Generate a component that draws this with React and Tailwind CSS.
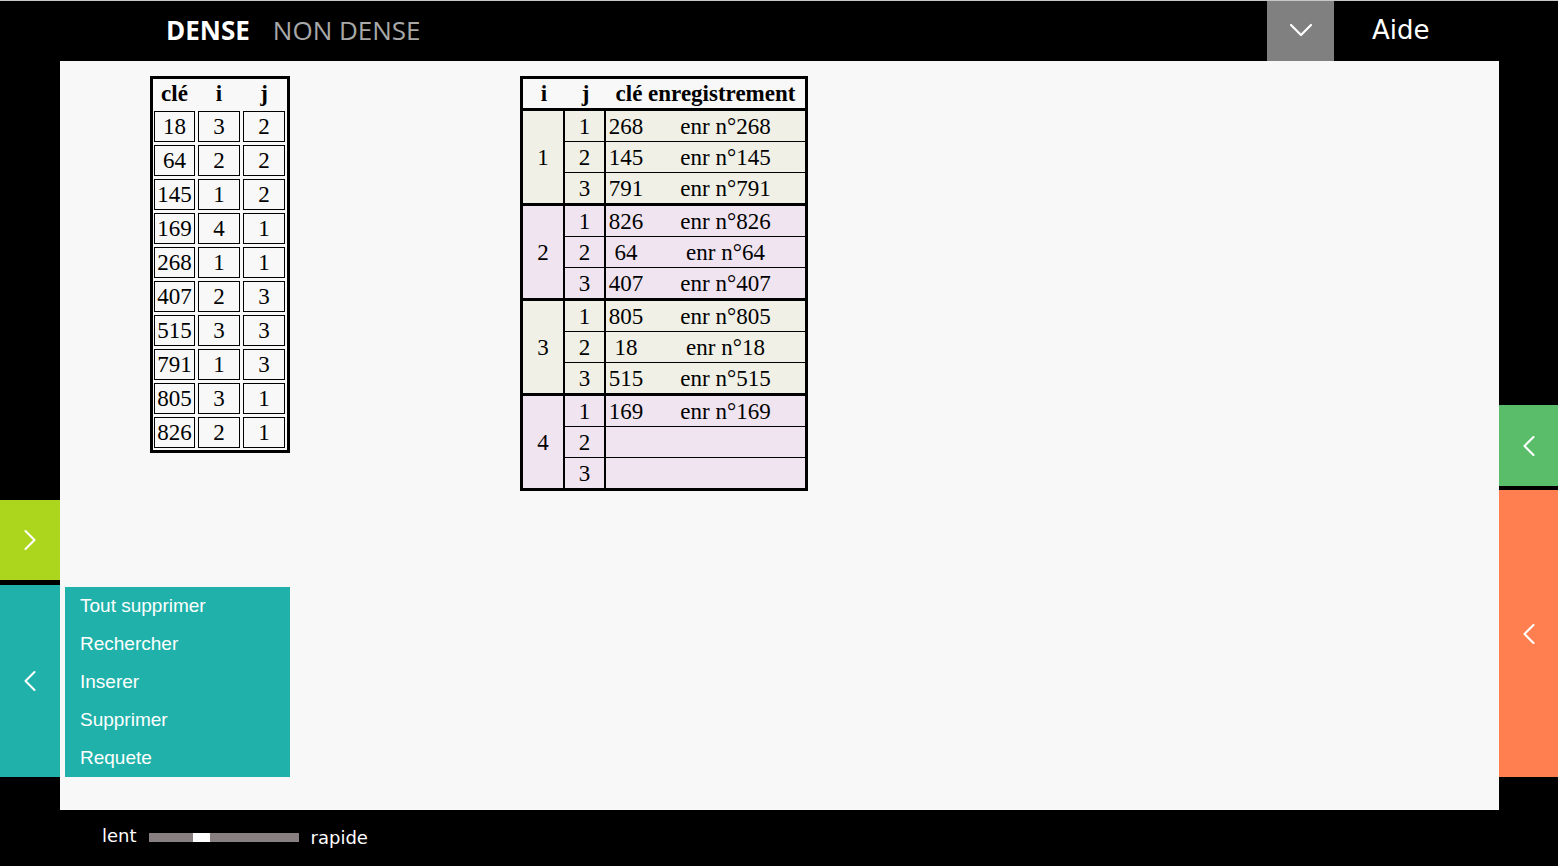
import { ChevronDown, ChevronLeft, ChevronRight } from "lucide-react";

const keys = [
  [18, 3, 2],
  [64, 2, 2],
  [145, 1, 2],
  [169, 4, 1],
  [268, 1, 1],
  [407, 2, 3],
  [515, 3, 3],
  [791, 1, 3],
  [805, 3, 1],
  [826, 2, 1],
];

const groups = [
  { i: 1, bg: "bg-[#f0f0e6]", rows: [268, 145, 791] },
  { i: 2, bg: "bg-[#f0e4f0]", rows: [826, 64, 407] },
  { i: 3, bg: "bg-[#f0f0e6]", rows: [805, 18, 515] },
  { i: 4, bg: "bg-[#f0e4f0]", rows: [169, null, null] },
];

const menu = ["Tout supprimer", "Rechercher", "Inserer", "Supprimer", "Requete"];

function KeyTable() {
  return (
    <div className="w-[140px] border-[3px] border-black px-[1px] pb-[2px] font-['Liberation_Serif',serif] text-[23px] text-black">
      <div className="flex h-[30px] items-center gap-[3px] font-bold">
        <div className="w-[41px] text-center">clé</div>
        <div className="w-[42px] text-center">i</div>
        <div className="w-[42px] text-center">j</div>
      </div>
      <div className="mt-[2px] flex flex-col gap-[3px]">
        {keys.map((r) => (
          <div key={r[0]} className="flex h-[31px] gap-[3px] leading-none">
            <div className="flex w-[41px] items-center justify-center border border-black">{r[0]}</div>
            <div className="flex w-[42px] items-center justify-center border border-black">{r[1]}</div>
            <div className="flex w-[42px] items-center justify-center border border-black">{r[2]}</div>
          </div>
        ))}
      </div>
    </div>
  );
}

function HashTable() {
  return (
    <div className="w-[288px] border-[3px] border-black font-['Liberation_Serif',serif] text-[23px] leading-none text-black">
      <div className="flex h-[32px] items-center border-b-[3px] border-black font-bold">
        <div className="w-[42px] text-center">i</div>
        <div className="w-[41px] text-center">j</div>
        <div className="flex-1 text-center">clé&nbsp;enregistrement</div>
      </div>
      {groups.map((g, gi) => (
        <div
          key={g.i}
          className={`flex ${g.bg} ${gi < groups.length - 1 ? "border-b-[3px] border-black" : ""}`}
        >
          <div className="flex w-[42px] items-center justify-center border-r-2 border-black">{g.i}</div>
          <div className="flex flex-1 flex-col">
            {g.rows.map((k, ri) => (
              <div key={ri} className={`flex ${ri > 0 ? "h-[31px] border-t border-black" : "h-[30px]"}`}>
                <div className="flex w-[41px] items-center justify-center border-r-2 border-black">{ri + 1}</div>
                <div className="flex flex-1 items-center">
                  <div className="w-[40px] text-center">{k}</div>
                  <div className="flex-1 text-center">{k ? `enr n°${k}` : ""}</div>
                </div>
              </div>
            ))}
          </div>
        </div>
      ))}
    </div>
  );
}

export default function App() {
  return (
    <div className="flex h-[866px] w-[1558px] flex-col overflow-hidden bg-black">
      {/* top bar */}
      <div className="flex h-[61px] items-stretch border-t border-[#c8c8c8]">
        <div className="flex items-center gap-[23px] pb-[2px] pl-[166px] font-['Open_Sans',sans-serif] text-[26px] leading-none">
          <span className="font-bold text-white">DENSE</span>
          <span className="text-[#a8a8a8]">NON DENSE</span>
        </div>
        <div className="ml-auto flex w-[67px] items-center justify-center bg-[#808080] pb-[3px]">
          <ChevronDown size={40} strokeWidth={1.3} color="white" />
        </div>
        <div className="flex w-[224px] items-center pb-[2px] pl-[38px] font-['DejaVu_Sans',sans-serif] text-[26px] text-white">
          Aide
        </div>
      </div>

      {/* middle */}
      <div className="flex h-[749px]">
        <div className="flex w-[60px] flex-col justify-end pb-[33px]">
          <div className="flex h-[80px] items-center justify-center bg-[#acd61e]">
            <ChevronRight size={36} strokeWidth={1.4} color="white" />
          </div>
          <div className="mt-[5px] flex h-[192px] items-center justify-center bg-[#20b2aa]">
            <ChevronLeft size={36} strokeWidth={1.4} color="white" />
          </div>
        </div>

        <div className="flex flex-1 flex-col bg-[#f8f8f8]">
          <div className="flex items-start pl-[90px] pt-[15px]">
            <KeyTable />
            <div className="ml-[230px]">
              <HashTable />
            </div>
          </div>
          <div className="mb-[33px] ml-[5px] mt-auto w-[225px] bg-[#20b2aa] font-['Liberation_Sans',sans-serif] text-[19px] text-white">
            {menu.map((m) => (
              <div key={m} className="flex h-[38px] items-center pl-[15px]">
                {m}
              </div>
            ))}
          </div>
        </div>

        <div className="flex w-[59px] flex-col justify-end pb-[33px]">
          <div className="flex h-[81px] items-center justify-center bg-[#5abd6a]">
            <ChevronLeft size={36} strokeWidth={1.4} color="white" />
          </div>
          <div className="mt-[4px] flex h-[287px] items-center justify-center bg-[#ff7f50]">
            <ChevronLeft size={36} strokeWidth={1.4} color="white" />
          </div>
        </div>
      </div>

      {/* bottom bar */}
      <div className="flex flex-1 items-center pb-[2px] pl-[102px] font-['DejaVu_Sans',sans-serif] text-[18px] text-white">
        <span className="mb-[4px]">lent</span>
        <div className="ml-[12px] flex h-[9px] w-[150px] bg-[#888080]">
          <div className="ml-[44px] h-full w-[17px] bg-white" />
        </div>
        <span className="ml-[12px]">rapide</span>
      </div>
    </div>
  );
}
